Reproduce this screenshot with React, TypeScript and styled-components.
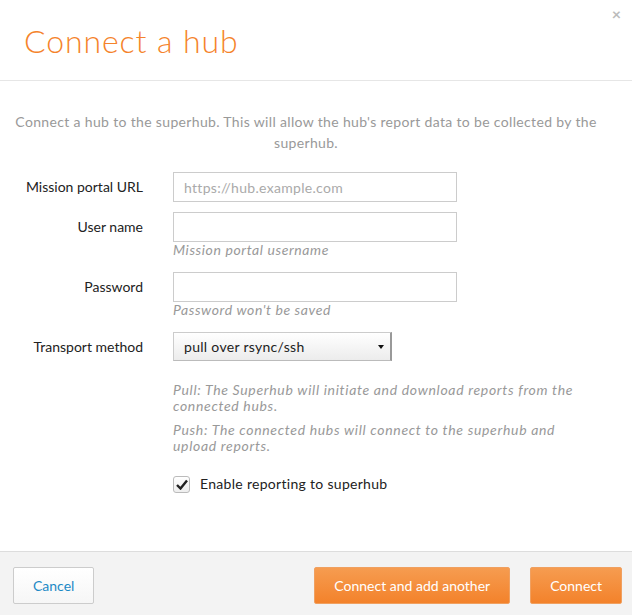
import styled, { createGlobalStyle } from "styled-components";

const Global = createGlobalStyle`
  html, body {
    margin: 0;
    padding: 0;
    background: #ffffff;
  }
  body {
    font-family: Lato, "Open Sans", "Liberation Sans", sans-serif;
    font-size: 14px;
    color: #222;
  }
  * { box-sizing: border-box; }
`;

const Modal = styled.div`
  position: relative;
  width: 632px;
  height: 615px;
  display: flex;
  flex-direction: column;
  background: #fff;
`;

const Header = styled.div`
  height: 81px;
  padding: 21px 24px 0;
  border-bottom: 1px solid #e6e6e6;
`;

const Title = styled.h1`
  margin: 0;
  font-size: 32px;
  font-weight: 300;
  letter-spacing: 0.9px;
  color: #f5832b;
  line-height: 40px;
`;

const Close = styled.span`
  position: absolute;
  top: 4px;
  right: 11px;
  font-size: 16px;
  color: #bbb;
  font-weight: 700;
`;

const Body = styled.div`
  flex: 1;
  padding: 30px 0 0;
`;

const Intro = styled.p`
  margin: 0 20px 19px 0;
  text-align: center;
  color: #999;
  line-height: 21px;
  letter-spacing: 0.34px;
`;

const Row = styled.div<{ $gap?: number }>`
  display: grid;
  grid-template-columns: 143px 284px;
  column-gap: 30px;
  align-items: start;
  margin-bottom: ${p => p.$gap ?? 10}px;
`;

const Label = styled.label`
  text-align: right;
  line-height: 30px;
  color: #222;
`;

const Field = styled.div`
  display: flex;
  flex-direction: column;
`;

const Input = styled.input`
  width: 284px;
  height: 30px;
  border: 1px solid #ccc;
  padding: 0 10px;
  font: inherit;
  letter-spacing: 0.3px;
  color: #333;
  outline: none;
  &::placeholder { color: #aaa; }
`;

const Hint = styled.span`
  font-style: italic;
  color: #999;
  line-height: 16px;
  letter-spacing: 0.6px;
`;

const SelectBox = styled.div`
  position: relative;
  width: 219px;
  height: 29px;
  border: 1px solid #ccc;
  border-right: 2px solid #999;
  border-bottom-color: #bbb;
  background: linear-gradient(#ffffff, #ececec);
  padding: 0 10px;
  line-height: 27px;
  letter-spacing: 0.3px;
  color: #222;
  &::after {
    content: "";
    position: absolute;
    right: 6px;
    top: 12px;
    border-left: 3px solid transparent;
    border-right: 3px solid transparent;
    border-top: 4px solid #111;
  }
`;

const Notes = styled.div`
  margin: 20px 0 0 173px;
  width: 412px;
  display: flex;
  flex-direction: column;
  gap: 8px;
`;

const Note = styled.p`
  margin: 0;
  font-style: italic;
  color: #999;
  line-height: 16px;
  letter-spacing: 0.68px;
`;

const Check = styled.label`
  margin: 20px 0 0 173px;
  display: flex;
  align-items: center;
  gap: 10px;
  line-height: 20px;
  letter-spacing: 0.3px;
  color: #222;
`;

const Box = styled.span`
  width: 17px;
  height: 17px;
  border: 1px solid #bbb;
  border-radius: 3px;
  background: linear-gradient(#fff, #eee);
  display: flex;
  align-items: center;
  justify-content: center;
`;

const Footer = styled.div`
  height: 64px;
  background: #f3f3f3;
  border-top: 1px solid #ddd;
  padding: 15px 10px 0 13px;
  display: flex;
  align-items: flex-start;
  gap: 20px;
`;

const Button = styled.button<{ $primary?: boolean }>`
  height: 37px;
  padding: 0 19px;
  font: inherit;
  font-size: 14px;
  border-radius: 2px;
  cursor: pointer;
  border: 1px solid ${p => (p.$primary ? "#f0a060" : "#ccc")};
  color: ${p => (p.$primary ? "#fff" : "#1d8ac6")};
  background: ${p =>
    p.$primary ? "linear-gradient(#f69c50, #f3822b)" : "linear-gradient(#ffffff, #f6f6f6)"};
`;

const Spacer = styled.div`
  flex: 1;
`;

export default function App() {
  return (
    <>
      <Global />
      <Modal>
        <Close>×</Close>
        <Header>
          <Title>Connect a hub</Title>
        </Header>
        <Body>
          <Intro>
            Connect a hub to the superhub. This will allow the hub's report data to be collected by the superhub.
          </Intro>
          <Row>
            <Label>Mission portal URL</Label>
            <Field>
              <Input placeholder="https://hub.example.com" />
            </Field>
          </Row>
          <Row $gap={14}>
            <Label>User name</Label>
            <Field>
              <Input />
              <Hint>Mission portal username</Hint>
            </Field>
          </Row>
          <Row $gap={14}>
            <Label>Password</Label>
            <Field>
              <Input type="password" />
              <Hint>Password won't be saved</Hint>
            </Field>
          </Row>
          <Row $gap={0}>
            <Label>Transport method</Label>
            <Field>
              <SelectBox>pull over rsync/ssh</SelectBox>
            </Field>
          </Row>
          <Notes>
            <Note>Pull: The Superhub will initiate and download reports from the connected hubs.</Note>
            <Note>Push: The connected hubs will connect to the superhub and upload reports.</Note>
          </Notes>
          <Check>
            <Box>
              <svg width="12" height="11" viewBox="0 0 12 11">
                <path d="M1 6 L4.5 9.5 L11 1.5" fill="none" stroke="#222" strokeWidth="2.4" />
              </svg>
            </Box>
            Enable reporting to superhub
          </Check>
        </Body>
        <Footer>
          <Button>Cancel</Button>
          <Spacer />
          <Button $primary>Connect and add another</Button>
          <Button $primary>Connect</Button>
        </Footer>
      </Modal>
    </>
  );
}
